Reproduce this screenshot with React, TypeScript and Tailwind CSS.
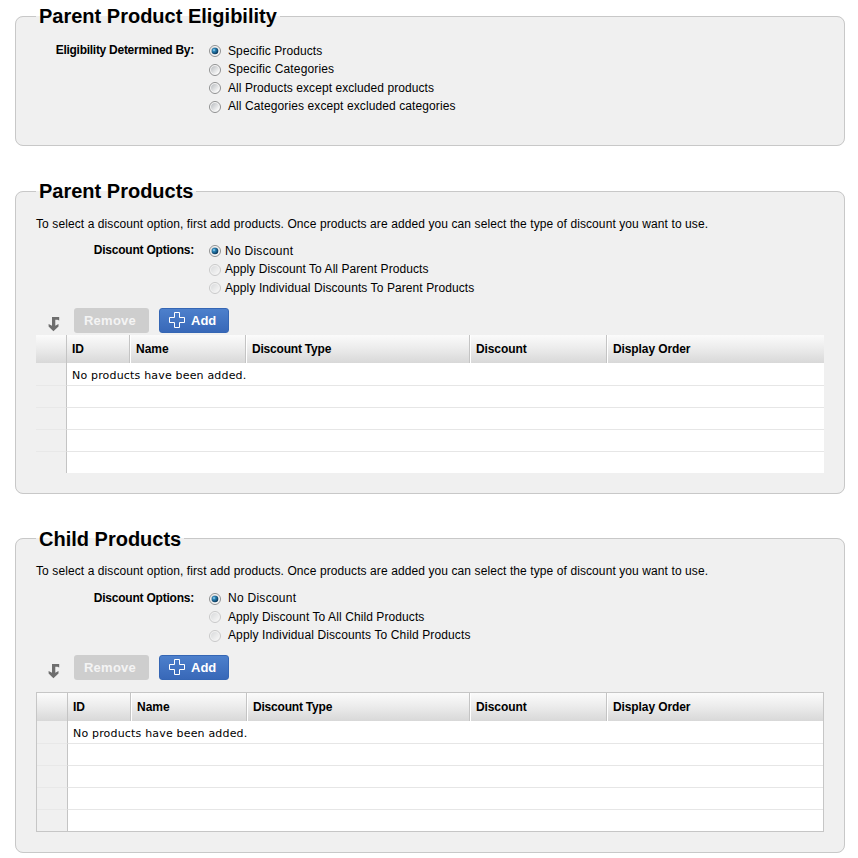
import React, { useId } from "react";

type Option = { label: string; row: string; dot: string; spacing: string };

function Radio({ checked, disabled, offset }: { checked?: boolean; disabled?: boolean; offset: string }) {
  const id = useId();
  return (
    <svg
      className={`h-3 w-3 shrink-0 ${offset} ${disabled ? "opacity-40" : ""}`}
      viewBox="0 0 12 12"
      role="radio"
      aria-checked={!!checked}
    >
      <defs>
        <linearGradient id={`${id}g`} x1="0" y1="0" x2="1" y2="1">
          <stop offset="0.15" stopColor="#c3c6c9" />
          <stop offset="0.85" stopColor="#f8f8f8" />
        </linearGradient>
        <radialGradient id={`${id}b`} cx="0.35" cy="0.35" r="0.65">
          <stop offset="0" stopColor="#b4e2f6" />
          <stop offset="0.35" stopColor="#2a83b6" />
          <stop offset="1" stopColor="#0c3a5c" />
        </radialGradient>
      </defs>
      <circle cx="6" cy="6" r="5.5" fill="#f7f7f7" stroke="#8f9091" />
      <circle cx="6" cy="6" r="4" fill={`url(#${id}g)`} />
      {checked && <circle cx="6" cy="6" r="3.3" fill={`url(#${id}b)`} />}
    </svg>
  );
}

function Options({
  title,
  titleClass,
  options,
  gap,
  lockOthers,
}: {
  title: string;
  titleClass: string;
  options: Option[];
  gap: string;
  lockOthers?: boolean;
}) {
  return (
    <div className="flex">
      <div className={`w-[158px] shrink-0 text-right font-bold leading-[18px] whitespace-nowrap ${titleClass}`}>{title}</div>
      <div className="ml-[15px]">
        {options.map((o, i) => (
          <label key={o.label} className={`flex items-start ${gap} ${o.row}`}>
            <Radio checked={i === 0} disabled={lockOthers && i > 0} offset={o.dot} />
            <span className={`leading-5 whitespace-nowrap ${o.spacing}`}>{o.label}</span>
          </label>
        ))}
      </div>
    </div>
  );
}

function Panel({
  title,
  size,
  legendClass,
  children,
}: {
  title: string;
  size: string;
  legendClass?: string;
  children: React.ReactNode;
}) {
  return (
    <fieldset className={`w-[830px] rounded-lg border border-[#c8c8c8] bg-[#f0f0f0] px-5 ${size}`}>
      <legend className={`h-[25px] px-[3px] text-[20px] font-bold ${legendClass ?? "leading-[25px]"}`}>{title}</legend>
      {children}
    </fieldset>
  );
}

function Toolbar() {
  return (
    <div className="flex h-[25px]">
      <svg className="mt-2 ml-3 h-4 w-3" viewBox="0 0 12 16" fill="#6e6e6e" aria-hidden="true">
        <path d="M4 1h7.2v3.6L9.4 3.7H7.3v6L10.5 8v2.6L5.4 15.2.6 10.6V8L4 9.7z" />
      </svg>
      <button className="ml-[14px] w-[75px] rounded-[3px] bg-[#cecece] pr-[3px] text-[13px] leading-[25px] font-bold tracking-[0.25px] text-[#f4f4f4]">
        Remove
      </button>
      <button className="ml-[10px] flex w-[70px] items-center rounded-[3px] border border-[#3566b4] bg-linear-to-b from-[#4d80cc] to-[#3868b8] pl-[9px] text-[13px] font-bold text-white">
        <svg className="-mt-px h-4 w-4" viewBox="0 0 16 16" fill="none" stroke="#fff" aria-hidden="true">
          <path d="M5.5.5h5v5h5v5h-5v5h-5v-5h-5v-5h5z" />
        </svg>
        <span className="ml-[6px] leading-[23px]">Add</span>
      </button>
    </div>
  );
}

const headings: [string, string, string][] = [
  ["ID", "w-[63px]", ""],
  ["Name", "w-[116px]", ""],
  ["Discount Type", "w-[224px]", "tracking-[-0.2px]"],
  ["Discount", "w-[137px]", "tracking-[-0.1px]"],
  ["Display Order", "grow", "tracking-[-0.1px]"],
];

const rowHeights = ["h-[23px]", "h-[22px]", "h-[22px]", "h-[22px]", "h-[21px]"];

function ProductTable({ framed }: { framed?: boolean }) {
  return (
    <div className={framed ? "border border-[#c6c6c6]" : ""}>
      <div className="flex h-7 bg-linear-to-b from-[#fbfbfb] via-[#ebebeb] to-[#d8d8d8]">
        <div className="w-[31px] shrink-0 border-r border-[#c4c4c4]" />
        {headings.map(([name, width, spacing], i) => (
          <div
            key={name}
            className={`shrink-0 pl-[5px] leading-[28px] font-bold whitespace-nowrap ${spacing} ${
              framed && i === 2 ? "w-[223px]" : width
            } ${i < 4 ? "border-r border-r-[#c4c4c4]" : ""} ${i > 0 ? "border-l border-l-white" : ""}`}
          >
            {name}
          </div>
        ))}
      </div>
      {rowHeights.map((height, n) => (
        <div key={n} className={`flex ${height}`}>
          <div
            className={`w-[31px] shrink-0 border-r border-r-[#c4c4c4] ${n < 4 ? "border-b border-b-[#e8e8e8]" : ""} bg-[#f0f0f0]`}
          />
          <div
            className={`grow bg-white pl-[5px] font-['DejaVu_Sans',sans-serif] text-[11px] leading-[26px] tracking-[0.18px] ${
              n < 4 ? "border-b border-b-[#e6e6e6]" : ""
            }`}
          >
            {n === 0 && "No products have been added."}
          </div>
        </div>
      ))}
    </div>
  );
}

function Hint() {
  return (
    <p className="mt-3 leading-4 tracking-[0.094px] whitespace-nowrap">
      To select a discount option, first add products. Once products are added you can select the type of discount you
      want to use.
    </p>
  );
}

export default function App() {
  return (
    <main className="flex h-[858px] flex-col overflow-hidden bg-white pt-1 pl-[15px] font-['Liberation_Sans',Arial,sans-serif] text-[12px] text-black">
      <Panel title="Parent Product Eligibility" size="h-[142px]">
        <div className="pt-3">
          <Options
            title="Eligibility Determined By:"
            titleClass="tracking-[-0.27px]"
            gap="gap-[7px]"
            options={[
              { label: "Specific Products", row: "h-[18px]", dot: "mt-1", spacing: "tracking-[0.1px]" },
              { label: "Specific Categories", row: "h-[19px]", dot: "mt-[5px]", spacing: "tracking-[0.15px]" },
              {
                label: "All Products except excluded products",
                row: "h-[18px]",
                dot: "mt-1",
                spacing: "tracking-[0.07px]",
              },
              {
                label: "All Categories except excluded categories",
                row: "h-[19px]",
                dot: "mt-[5px]",
                spacing: "tracking-[0.1px]",
              },
            ]}
          />
        </div>
      </Panel>

      <div className="mt-[33px]">
        <Panel title="Parent Products" size="h-[315px]">
          <Hint />
          <div className="h-[76px] pt-[9px]">
            <Options
              title="Discount Options:"
              titleClass="tracking-[-0.22px]"
              gap="gap-1"
              lockOthers
              options={[
                { label: "No Discount", row: "h-[18px]", dot: "mt-1", spacing: "tracking-[0.27px]" },
                {
                  label: "Apply Discount To All Parent Products",
                  row: "h-[19px]",
                  dot: "mt-[5px]",
                  spacing: "tracking-[0.06px]",
                },
                {
                  label: "Apply Individual Discounts To Parent Products",
                  row: "h-[18px]",
                  dot: "mt-1",
                  spacing: "tracking-[0.09px]",
                },
              ]}
            />
          </div>
          <Toolbar />
          <div className="mt-[2px]">
            <ProductTable />
          </div>
        </Panel>
      </div>

      <div className="mt-8">
        <Panel title="Child Products" size="h-[327px]" legendClass="leading-[27px]">
          <Hint />
          <div className="h-[76px] pt-[9px]">
            <Options
              title="Discount Options:"
              titleClass="pt-px tracking-[-0.22px]"
              gap="gap-[7px]"
              lockOthers
              options={[
                { label: "No Discount", row: "h-[19px]", dot: "mt-[5px]", spacing: "tracking-[0.27px]" },
                {
                  label: "Apply Discount To All Child Products",
                  row: "h-[18px]",
                  dot: "mt-1",
                  spacing: "tracking-[0.09px]",
                },
                {
                  label: "Apply Individual Discounts To Child Products",
                  row: "h-[18px]",
                  dot: "mt-[5px]",
                  spacing: "tracking-[0.12px]",
                },
              ]}
            />
          </div>
          <Toolbar />
          <div className="mt-3">
            <ProductTable framed />
          </div>
        </Panel>
      </div>
    </main>
  );
}
